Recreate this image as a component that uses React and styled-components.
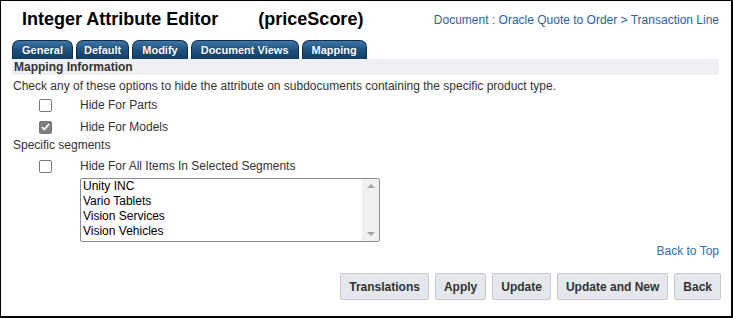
import React from "react";
import styled, { createGlobalStyle } from "styled-components";

const GlobalStyle = createGlobalStyle`
  html, body {
    margin: 0;
    padding: 0;
    background: #fff;
  }
  body {
    font-family: Arial, "Liberation Sans", sans-serif;
    font-size: 12px;
    color: #333;
  }
`;

const Frame = styled.div`
  width: 733px;
  height: 318px;
  box-sizing: border-box;
  border: 1px solid #000;
  border-right-width: 2px;
  border-bottom-width: 2px;
  padding: 0 11px 0 11px;
  display: flex;
  flex-direction: column;
`;

const Header = styled.div`
  display: flex;
  align-items: center;
  justify-content: space-between;
  height: 37px;
  padding-left: 10px;
`;

const Title = styled.h1`
  margin: 0;
  font-size: 18px;
  font-weight: bold;
  color: #000;
  display: flex;
  gap: 40px;
`;

const Crumb = styled.a`
  font-size: 12px;
  color: #2e5f9e;
  text-decoration: none;
  margin-right: 1px;
`;

const TabBar = styled.div`
  display: flex;
  gap: 3px;
  margin-top: 2px;
  height: 19px;
`;

const Tab = styled.div`
  height: 19px;
  box-sizing: border-box;
  padding: 0 ${(p) => p.$pad}px;
  display: flex;
  align-items: center;
  border-radius: 7px 7px 0 0;
  background: linear-gradient(#3f74a3, #1c4f7c 55%, #123e66);
  border: 1px solid #0d2f4f;
  border-bottom: none;
  color: #fff;
  font-weight: bold;
  font-size: 11px;
  text-shadow: 0 0 1px #0a2440;
`;

const SectionBar = styled.div`
  background: #eef0f4;
  height: 16px;
  line-height: 16px;
  font-weight: bold;
  font-size: 12px;
  color: #333;
  padding-left: 2px;
  margin-right: 1px;
`;

const Body = styled.div`
  padding-left: 1px;
  display: flex;
  flex-direction: column;
`;

const Text = styled.div`
  font-size: 12px;
  line-height: 15px;
  margin-top: ${(p) => p.$mt || 0}px;
`;

const OptionRow = styled.label`
  display: flex;
  align-items: center;
  height: 22px;
  margin-top: ${(p) => p.$mt || 0}px;
`;

const Box = styled.span`
  width: 13px;
  height: 13px;
  box-sizing: border-box;
  margin-left: 26px;
  margin-right: 28px;
  border-radius: 2px;
  border: 1px solid #777;
  background: ${(p) => (p.$checked ? "#808080" : "#fff")};
  display: flex;
  align-items: center;
  justify-content: center;
`;

const ListBox = styled.div`
  margin-left: 67px;
  margin-top: 1px;
  width: 300px;
  height: 64px;
  box-sizing: border-box;
  border: 1px solid #8d8d8d;
  border-radius: 2px;
  display: flex;
`;

const ListItems = styled.div`
  flex: 1;
  padding-left: 2px;
  font-size: 12px;
  line-height: 15px;
  color: #000;
`;

const ScrollTrack = styled.div`
  width: 17px;
  background: #f0f0f0;
  display: flex;
  flex-direction: column;
  justify-content: space-between;
  align-items: center;
  padding: 5px 0;
  box-sizing: border-box;
`;

const Arrow = styled.span`
  width: 0;
  height: 0;
  border-left: 4px solid transparent;
  border-right: 4px solid transparent;
  ${(p) =>
    p.$up
      ? "border-bottom: 4px solid #a3a3a3;"
      : "border-top: 4px solid #a3a3a3;"}
`;

const TopLink = styled.a`
  align-self: flex-end;
  margin-top: 2px;
  margin-right: 1px;
  font-size: 12px;
  color: #2e6fb0;
  text-decoration: none;
`;

const Buttons = styled.div`
  display: flex;
  justify-content: flex-end;
  gap: 6px;
  margin-top: 15px;
  margin-right: -1px;
`;

const Button = styled.button`
  height: 27px;
  padding: 0 8px;
  box-sizing: border-box;
  border: 1px solid #c5cacf;
  border-radius: 2px;
  background: #e4e8ec;
  color: #333;
  font-family: Arial, "Liberation Sans", sans-serif;
  font-weight: bold;
  font-size: 12px;
`;

const Check = () => (
  <svg width="9" height="8" viewBox="0 0 9 8">
    <path d="M1 4.2 L3.4 6.5 L8 1.2" fill="none" stroke="#fff" strokeWidth="1.8" />
  </svg>
);

const tabs = [
  ["General", 9],
  ["Default", 7],
  ["Modify", 9],
  ["Document Views", 9],
  ["Mapping", 9],
];

const segments = ["Unity INC", "Vario Tablets", "Vision Services", "Vision Vehicles"];

export default function App() {
  return (
    <>
      <GlobalStyle />
      <Frame>
        <Header>
          <Title>
            <span>Integer Attribute Editor</span>
            <span>(priceScore)</span>
          </Title>
          <Crumb>Document : Oracle Quote to Order &gt; Transaction Line</Crumb>
        </Header>
        <TabBar>
          {tabs.map(([t, pad]) => (
            <Tab key={t} $pad={pad}>
              {t}
            </Tab>
          ))}
        </TabBar>
        <SectionBar>Mapping Information</SectionBar>
        <Body>
          <Text $mt={4}>
            Check any of these options to hide the attribute on subdocuments containing the
            specific product type.
          </Text>
          <OptionRow>
            <Box />
            Hide For Parts
          </OptionRow>
          <OptionRow>
            <Box $checked>
              <Check />
            </Box>
            Hide For Models
          </OptionRow>
          <Text>Specific segments</Text>
          <OptionRow $mt={2}>
            <Box />
            Hide For All Items In Selected Segments
          </OptionRow>
          <ListBox>
            <ListItems>
              {segments.map((s) => (
                <div key={s}>{s}</div>
              ))}
            </ListItems>
            <ScrollTrack>
              <Arrow $up />
              <Arrow />
            </ScrollTrack>
          </ListBox>
          <TopLink>Back to Top</TopLink>
        </Body>
        <Buttons>
          <Button>Translations</Button>
          <Button>Apply</Button>
          <Button>Update</Button>
          <Button>Update and New</Button>
          <Button>Back</Button>
        </Buttons>
      </Frame>
    </>
  );
}
